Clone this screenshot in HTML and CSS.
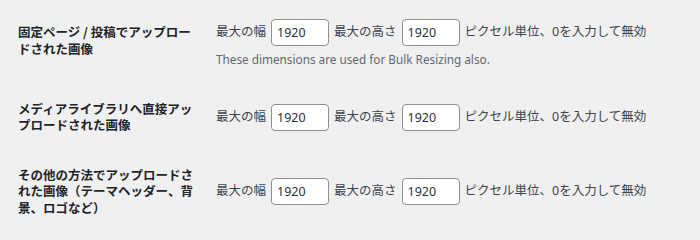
FILE: index.html
```html
<!DOCTYPE html>
<html lang="ja">
<head>
<meta charset="utf-8">
<link rel="stylesheet" href="styles.css">
</head>
<body>
<div class="form-table">
  <div class="row">
    <div class="label">固定ページ / 投稿でアップロー<br>ドされた画像</div>
    <div class="field">
      <div class="fields">
        <span>最大の幅</span><input class="num" type="text" value="1920">
        <span>最大の高さ</span><input class="num" type="text" value="1920">
        <span>ピクセル単位、0を入力して無効</span>
      </div>
      <p class="description">These dimensions are used for Bulk Resizing also.</p>
    </div>
  </div>
  <div class="row">
    <div class="label">メディアライブラリへ直接アッ<br>プロードされた画像</div>
    <div class="field">
      <div class="fields">
        <span>最大の幅</span><input class="num" type="text" value="1920">
        <span>最大の高さ</span><input class="num" type="text" value="1920">
        <span>ピクセル単位、0を入力して無効</span>
      </div>
    </div>
  </div>
  <div class="row">
    <div class="label">その他の方法でアップロードさ<br>れた画像（テーマヘッダー、背<br>景、ロゴなど）</div>
    <div class="field">
      <div class="fields">
        <span>最大の幅</span><input class="num" type="text" value="1920">
        <span>最大の高さ</span><input class="num" type="text" value="1920">
        <span>ピクセル単位、0を入力して無効</span>
      </div>
    </div>
  </div>
</div>
</body>
</html>
```
FILE: styles.css
```css
html, body {
  margin: 0;
  padding: 0;
  background: #f0f0f1;
}
body {
  font-family: "Noto Sans", "Noto Sans CJK JP", sans-serif;
  font-size: 12.5px;
  line-height: 1.3;
  color: #3c434a;
}
.form-table {
  padding: 7.7px 0 0 18px;
}
.row {
  display: grid;
  grid-template-columns: 180px auto;
  column-gap: 9px;
}
.label {
  padding: 16.35px 0;
  line-height: 16.5px;
  font-weight: 700;
  color: #1d2327;
  font-family: "Noto Sans CJK JP", "Noto Sans", sans-serif;
  white-space: nowrap;
}
.field {
  align-self: center;
  padding: 11.3px 9px;
}
.fields {
  display: flex;
  align-items: center;
  gap: 5px;
  white-space: nowrap;
}
.num {
  box-sizing: border-box;
  width: 58px;
  height: 27px;
  margin: 0;
  padding: 0 5px;
  border: 1px solid #8c8f94;
  border-radius: 4px;
  background: #fff;
  color: #2c3338;
  font-family: "Noto Sans", sans-serif;
  font-size: 12.5px;
}
.description {
  margin: 6px 0 6px;
  color: #646970;
  font-family: "Noto Sans", sans-serif;
  font-size: 11.75px;
}
```
